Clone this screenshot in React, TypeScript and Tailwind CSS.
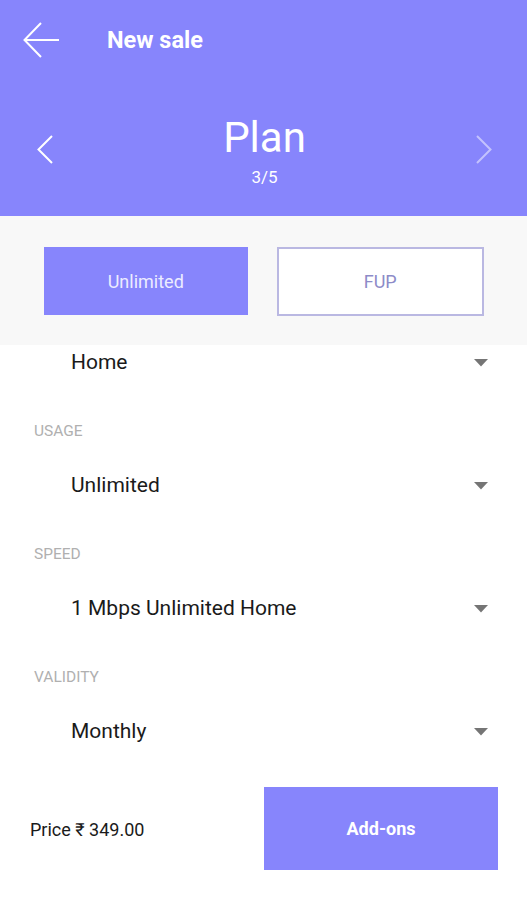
import React from 'react';

const fields = [
  { label: '', value: 'Home' },
  { label: 'USAGE', value: 'Unlimited' },
  { label: 'SPEED', value: '1 Mbps Unlimited Home' },
  { label: 'VALIDITY', value: 'Monthly' },
];

function Caret() {
  return (
    <svg width="14" height="8" viewBox="0 0 14 8">
      <path d="M0 0 L14 0 L7 7.5 Z" fill="#757575" />
    </svg>
  );
}

export default function App() {
  return (
    <div className="flex h-[900px] w-[527px] flex-col bg-white font-['Roboto',sans-serif]">
      {/* header */}
      <div className="flex h-[216px] flex-col bg-[#8785fc] text-white">
        <div className="flex h-[82px] items-center pl-[23px]">
          <svg width="37" height="36" viewBox="0 0 37 36" fill="none" stroke="white" strokeWidth="2" className="mt-[-2px]">
            <path d="M36 18 H2" />
            <path d="M18 1 L1.5 18 L18 35" />
          </svg>
          <span className="ml-[47px] text-[23.5px] font-bold">New sale</span>
        </div>
        <div className="mt-[32px] flex items-start justify-between px-[37px]">
          <svg width="16" height="29" viewBox="0 0 16 29" fill="none" stroke="white" strokeWidth="2" className="mt-[21px]">
            <path d="M15 1 L1.5 14.5 L15 28" />
          </svg>
          <div className="flex flex-col items-center">
            <span className="text-[42px] leading-[48px]">Plan</span>
            <span className="mt-[5px] text-[17px] leading-[20px]">3/5</span>
          </div>
          <svg width="16" height="29" viewBox="0 0 16 29" fill="none" stroke="white" strokeOpacity="0.5" strokeWidth="2" className="mr-[-2px] mt-[21px]">
            <path d="M1 1 L14.5 14.5 L1 28" />
          </svg>
        </div>
      </div>

      {/* plan type toggle */}
      <div className="flex h-[129px] items-start gap-[29px] bg-[#f8f8f8] pl-[44px] pr-[43px] pt-[31px]">
        <button className="flex h-[68px] flex-1 items-center justify-center bg-[#8785fc] text-[18px] text-[#ececff]">
          Unlimited
        </button>
        <button className="flex h-[69px] flex-1 items-center justify-center border-2 border-[#bab8e2] bg-white text-[18px] text-[#8d8bc8]">
          FUP
        </button>
      </div>

      {/* form */}
      <div className="flex flex-col pl-[34px] pr-[39px] pt-[1px]">
        {fields.map((f, i) => (
          <div key={i} className="flex flex-col">
            {f.label && (
              <div className="mt-[42px] flex h-[20px] items-center text-[15.5px] text-[#b0b0b0]">{f.label}</div>
            )}
            <div className={`flex h-[34px] items-center justify-between ${f.label ? 'mt-[27px]' : ''}`}>
              <span className="pl-[37px] text-[21px] text-[#1a1a1a]">{f.value}</span>
              <Caret />
            </div>
          </div>
        ))}
      </div>

      {/* footer */}
      <div className="mt-[38px] flex items-center justify-between pl-[30px] pr-[29px]">
        <span className="mt-[2px] text-[18px] text-[#1a1a1a]">Price ₹ 349.00</span>
        <button className="flex h-[83px] w-[234px] items-center justify-center bg-[#8785fc] text-[18px] font-bold text-white">
          Add-ons
        </button>
      </div>
    </div>
  );
}
